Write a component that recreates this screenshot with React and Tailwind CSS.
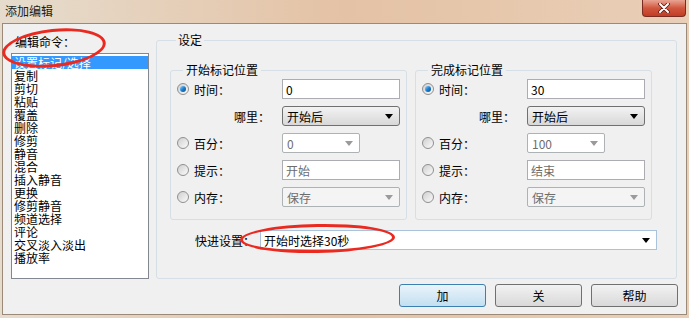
import React from 'react';

const Radio = ({ on }) => (
  <span className="flex w-[12px] h-[12px] shrink-0 items-center justify-center rounded-full border border-[#8e8f8f] bg-linear-to-br from-[#cfcfcf] to-[#fbfbfb]">
    {on && <span className="w-[6px] h-[6px] rounded-full bg-linear-to-br from-[#8fd3ff] via-[#1c7fd0] to-[#0a4f8c]" />}
  </span>
);

const Arrow = ({ gray }) => (
  <svg width="8" height="5" viewBox="0 0 8 5" className="shrink-0">
    <path d="M0 0H8L4 5Z" fill={gray ? '#9a9a9a' : '#000'} />
  </svg>
);

const Row = ({ children }) => <div className="flex h-[20px] items-center">{children}</div>;

const RadioLabel = ({ on, text }) => (
  <div className="flex w-[105px] items-center">
    <Radio on={on} />
    <span className="ml-[5px]">{text}</span>
  </div>
);

const TextBox = ({ value, gray, className = '' }) => (
  <div className={`flex h-[20px] items-center border border-[#abadb3] bg-white px-[3px] ${gray ? 'text-[#6d6d6d]' : 'text-black'} ${className}`}>
    {value}
  </div>
);

const Combo = ({ value, disabled, bg = 'bg-white', w = 'w-[118px]' }) => (
  <div className={`flex h-[20px] items-center justify-between rounded-[2px] border border-[#adb2b5] ${bg} pl-[4px] pr-[6px] text-[#6d6d6d] ${w}`}>
    <span>{value}</span>
    <Arrow gray={disabled} />
  </div>
);

const Where = () => (
  <div className="flex h-[20px] w-[118px] items-center justify-between rounded-[3px] border border-[#707070] bg-linear-to-b from-[#f3f3f3] to-[#d8d8d8] pl-[4px] pr-[6px]">
    <span>开始后</span>
    <Arrow />
  </div>
);

const MarkBox = ({ title, time, pct, hint }) => (
  <fieldset className="w-[237px] shrink-0 rounded-[3px] border border-[#d5dfe5] px-[6px] pb-[12px] pt-[2px]">
    <legend className="ml-[6px] px-[3px] leading-[14px]">{title}</legend>
    <div className="flex flex-col gap-[7px]">
      <Row>
        <RadioLabel on text="时间：" />
        <TextBox value={time} className="w-[118px]" />
      </Row>
      <Row>
        <div className="w-[105px] pr-[12px] text-right">哪里：</div>
        <Where />
      </Row>
      <Row>
        <RadioLabel text="百分：" />
        <Combo value={pct} disabled w="w-[78px]" />
      </Row>
      <Row>
        <RadioLabel text="提示：" />
        <TextBox value={hint} gray className="w-[118px]" />
      </Row>
      <Row>
        <RadioLabel text="内存：" />
        <Combo value="保存" disabled bg="bg-[#f4f4f4]" />
      </Row>
    </div>
  </fieldset>
);

const Button = ({ children, focus }) => (
  <button
    className={`h-[23px] w-[87px] rounded-[3px] border ${
      focus
        ? 'border-[#3c7fb1] bg-linear-to-b from-[#eaf4fb] to-[#c3dff1]'
        : 'border-[#707070] bg-linear-to-b from-[#f2f2f2] to-[#d9d9d9]'
    } text-black`}
  >
    {children}
  </button>
);

const commands = [
  '设置标记/选择', '复制', '剪切', '粘贴', '覆盖', '删除', '修剪', '静音',
  '混合', '插入静音', '更换', '修剪静音', '频道选择', '评论', '交叉淡入淡出', '播放率',
];

export default function App() {
  return (
    <div className="relative flex h-[318px] w-[689px] flex-col overflow-hidden bg-linear-to-r from-[#e6dccd] via-[#e4c2a5] to-[#e9cfb7] font-['Noto_Sans_CJK_SC','Liberation_Sans',sans-serif] text-[12px] leading-[13px] text-black">
      {/* title bar */}
      <div className="flex h-[23px] shrink-0 items-start justify-between">
        <span className="ml-[5px] mt-[4px] text-[#1b1b1b]">添加编辑</span>
        <div className="mr-[3px] flex h-[17px] w-[44px] items-center justify-center rounded-b-[4px] border border-t-0 border-[#7a2b22] bg-linear-to-b from-[#e9a493] via-[#d0573f] to-[#c33b24]">
          <svg width="12" height="10" viewBox="0 0 12 10">
            <path d="M2 1L10 9M10 1L2 9" stroke="#5a1a12" strokeWidth="3.6" strokeLinecap="round" />
            <path d="M2 1L10 9M10 1L2 9" stroke="#fff" strokeWidth="2" strokeLinecap="round" />
          </svg>
        </div>
      </div>

      {/* client area */}
      <div className="mx-[2px] mb-[3px] flex flex-1 flex-col border border-[#9c8a78] bg-[#f0f0f0]">
        <div className="flex pl-[8px] pr-[8px]">
          {/* command list */}
          <div className="flex w-[138px] shrink-0 flex-col pt-[11px]">
            <div className="ml-[4px] leading-[14px]">编辑命令：</div>
            <div className="mt-[4px] h-[226px] border border-[#828790] bg-white pt-[2px]">
              {commands.map((c, i) => (
                <div key={c} className={`pl-[2px] leading-[13px] ${i === 0 ? 'bg-[#3399ff] text-white' : ''}`}>
                  {c}
                </div>
              ))}
            </div>
          </div>

          {/* settings group */}
          <fieldset className="ml-[7px] mt-[9px] w-[521px] shrink-0 rounded-[3px] border border-[#d5dfe5] pb-[26px] pl-[13px] pr-[4px] pt-[16px]">
            <legend className="ml-[6px] px-[2px] leading-[14px]">设定</legend>
            <div className="flex gap-[8px]">
              <MarkBox title="开始标记位置" time="0" pct="0" hint="开始" />
              <MarkBox title="完成标记位置" time="30" pct="100" hint="结束" />
            </div>
            <div className="mt-[10px] flex h-[20px] items-center whitespace-nowrap pl-[25px]">
              <span>快进设置：</span>
              <div className="ml-[5px] flex h-[20px] w-[397px] shrink-0 items-center justify-between border border-[#a9c3dc] bg-white pl-[3px] pr-[6px]">
                <span>开始时选择30秒</span>
                <Arrow />
              </div>
            </div>
          </fieldset>
        </div>

        {/* buttons */}
        <div className="mt-[5px] flex justify-end gap-[9px] pr-[8px]">
          <Button focus>加</Button>
          <Button>关</Button>
          <Button>帮助</Button>
        </div>
      </div>

      {/* red annotation ellipses */}
      <div className="pointer-events-none absolute left-[2px] top-[29px] h-[38px] w-[104px] -rotate-[6deg] rounded-[50%] border-[3px] border-[#ea2a20]" />
      <div className="pointer-events-none absolute left-[240px] top-[224px] h-[29px] w-[155px] -rotate-[1deg] rounded-[50%] border-[3px] border-[#ea2a20]" />
    </div>
  );
}
